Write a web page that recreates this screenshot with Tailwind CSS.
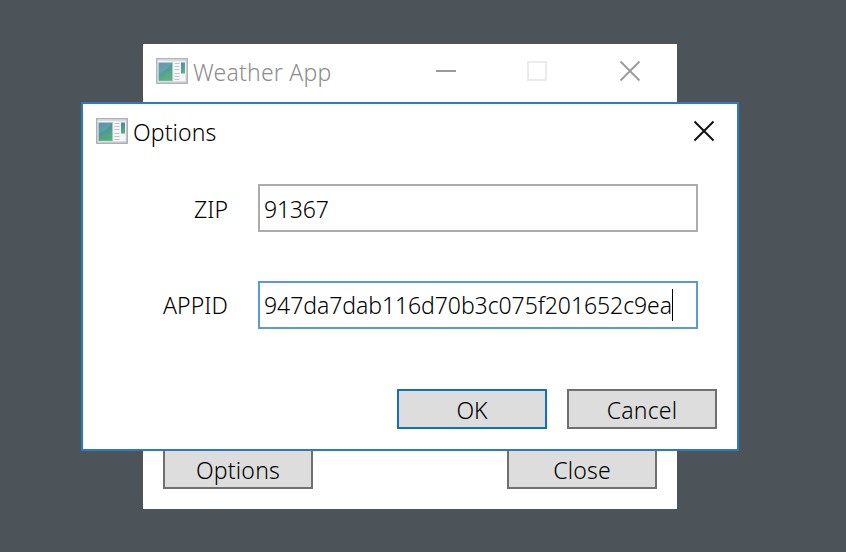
<!DOCTYPE html>
<html lang="en">
<head>
<meta charset="utf-8">
<title>Weather App</title>
<script src="https://cdn.jsdelivr.net/npm/@tailwindcss/browser@4"></script>
</head>
<body class="relative h-[552px] w-[846px] overflow-hidden bg-[#4c545a] font-['Noto_Sans','Open_Sans',sans-serif] text-[23px] leading-8 font-[350] text-black">
<svg class="absolute h-0 w-0">
  <defs>
    <linearGradient id="pane" x1="0" y1="0" x2=".4" y2="1"><stop offset="0" stop-color="#4d83ad"/><stop offset=".5" stop-color="#4b9698"/><stop offset="1" stop-color="#55ad78"/></linearGradient>
    <linearGradient id="frame" x1="0" y1="0" x2="1" y2="1"><stop offset="0" stop-color="#f8f8f8"/><stop offset="1" stop-color="#d5d8db"/></linearGradient>
    <symbol id="app" viewBox="0 0 32 26">
      <rect x=".75" y=".75" width="30.5" height="24.5" fill="url(#frame)" stroke="#a4a8ad" stroke-width="1.3"/>
      <path d="M2 2.5h28" stroke="#d9dcdf"/>
      <path d="M2.5 4.500h14v18.500h-14z" fill="url(#pane)" stroke="#b4cbd2" stroke-width=".6"/>
      <path d="M3 15C8 14 13 10 16 5v-.2H3z" fill="#fff" opacity=".1"/>
      <path d="M17.500 4h12v19h-12z" fill="#f5f6f7"/>
      <path d="M18.500 5.500h5m-5 3h5m-5 3h5m-5 4h5m-5 3h5m-5 3h5" stroke="#bfc2c5" stroke-width="1"/>
      <path d="M25 4.500h4v11h-4z" fill="url(#pane)"/>
    </symbol>
  </defs>
</svg>

<main class="absolute top-[44px] left-[143px] flex h-[465px] w-[534px] flex-col justify-between bg-white">
  <header class="flex h-[58px] items-start pl-[13px] text-[#8c8c8c]">
    <svg class="mt-[14px] h-[26px] w-8 opacity-95"><use href="#app"/></svg>
    <h1 class="mt-[12px] ml-[5px] w-[220px] tracking-[0.22px] whitespace-nowrap">Weather App</h1>
    <svg class="mt-[16px] ml-[23px] h-[22px] w-[206px]" viewBox="0 0 206 22" fill="none" stroke-width="2">
      <path d="M0 11h20" stroke="#999"/>
      <path d="M92 2h18v18H92z" stroke="#ebebeb"/>
      <path d="M184.500 1.500l19 19m0-19l-19 19" stroke="#999" stroke-width="1.8"/>
    </svg>
  </header>
  <footer class="flex justify-between px-5 pb-5">
    <button class="h-10 w-[150px] border-2 border-[#707070] bg-[#ddd]"><span class="relative top-px tracking-[0.2px]">Options</span></button>
    <button class="h-10 w-[150px] border-2 border-[#707070] bg-[#ddd]"><span class="relative top-px tracking-[0.2px]">Close</span></button>
  </footer>
</main>

<section class="absolute top-[102px] left-[81px] flex h-[349px] w-[658px] flex-col border-2 border-[#2a7cbd] bg-white">
  <header class="flex h-[80px] items-start pl-[13px]">
    <svg class="mt-[14px] h-[26px] w-8"><use href="#app"/></svg>
    <h2 class="mt-[12px] ml-[5px] grow tracking-[0.1px]">Options</h2>
    <svg class="mt-[16px] mr-[22px] h-[22px] w-[22px]" viewBox="0 0 22 22" fill="none" stroke="#111" stroke-width="2"><path d="M1.500 1.500l19 19m0-19l-19 19"/></svg>
  </header>
  <div class="flex flex-col gap-[49px] pr-[39px]">
    <div class="flex items-center">
      <label class="w-[145px] pt-[2px] text-right">ZIP</label>
      <div class="ml-[30px] flex h-12 grow items-center border-2 border-[#ababab] pt-[2px] pl-[4px] tracking-[-0.22px]">91367</div>
    </div>
    <div class="flex items-center">
      <label class="w-[145px] text-right tracking-[0.1px]">APPID</label>
      <div class="ml-[30px] flex h-12 grow items-center border-2 border-[#5b9bd5] pl-[4px]"><span class="tracking-[-0.07px]">947da7dab116d70b3c075f201652c9ea</span><i class="h-8 w-px bg-black"></i></div>
    </div>
  </div>
  <footer class="mt-[60px] flex justify-end gap-5 pr-5">
    <button class="h-10 w-[150px] border-2 border-[#0f72b9] bg-[#ddd]"><span class="relative top-px">OK</span></button>
    <button class="h-10 w-[150px] border-2 border-[#707070] bg-[#ddd]"><span class="relative top-px tracking-[0.2px]">Cancel</span></button>
  </footer>
</section>
</body>
</html>
